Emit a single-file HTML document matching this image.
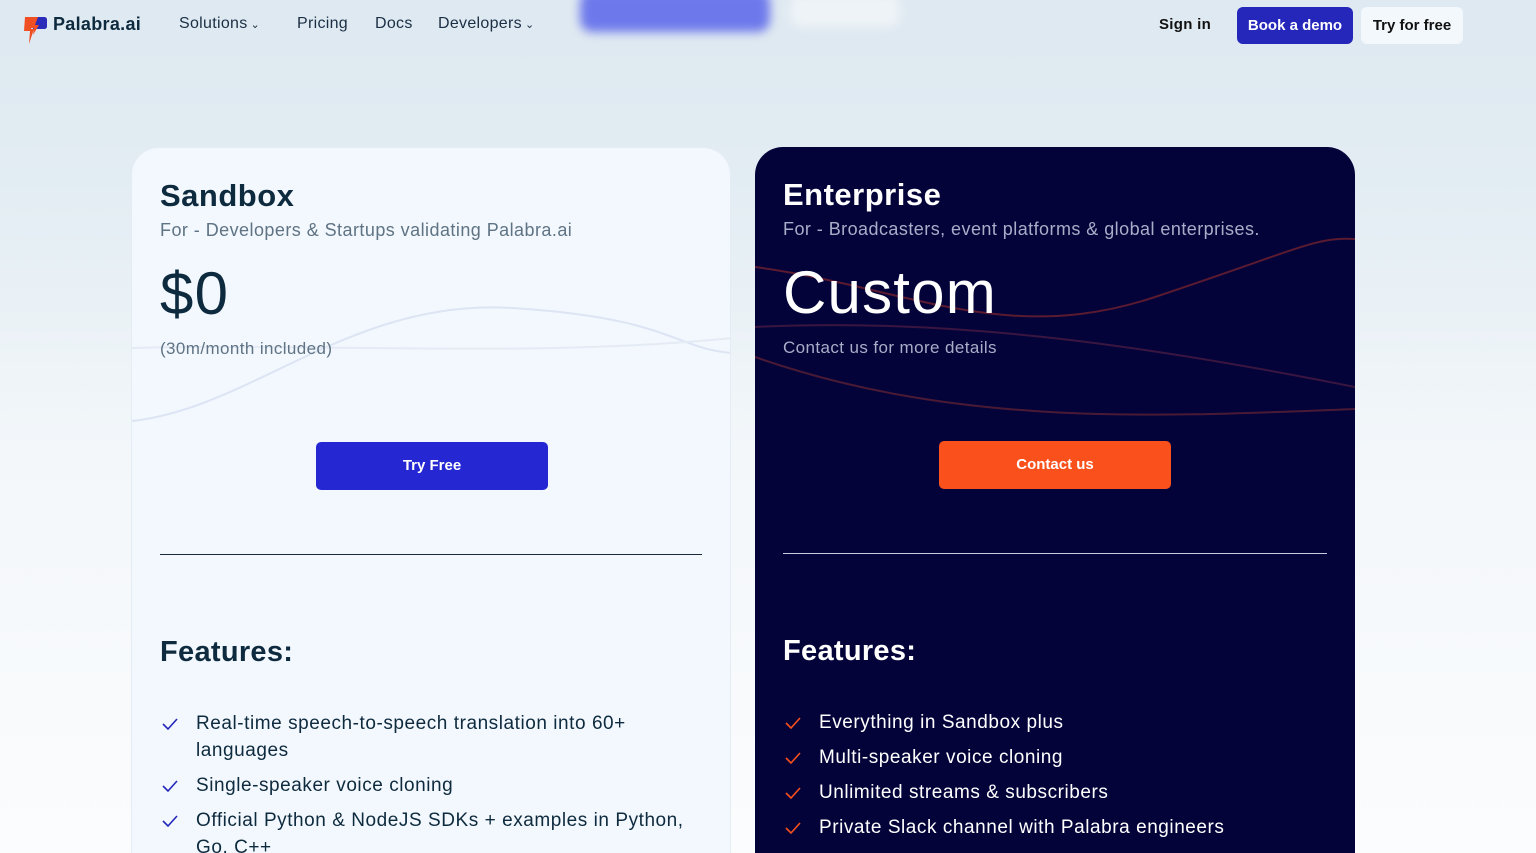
<!DOCTYPE html>
<html><head><meta charset="utf-8"><style>
*{box-sizing:border-box;margin:0;padding:0}
html,body{width:1536px;height:853px;overflow:hidden}
body{font-family:"Liberation Sans",sans-serif;background:linear-gradient(#dde8f0 0,#e3edf3 200px,#f3f7fa 450px,#fbfcfd 853px);position:relative;color:#0e2a3e}
.nav{position:absolute;top:0;left:0;width:1536px;height:57px;background:#dfe9f1}
.nav a{position:absolute;top:15px;font-size:16px;color:#1a2f44;text-decoration:none;letter-spacing:.3px}
.chev{font-size:11px;margin-left:3px}
.blur1{position:absolute;left:580px;top:-10px;width:190px;height:42px;background:#5a66ea;border-radius:12px;filter:blur(5px);opacity:.85}
.blur2{position:absolute;left:790px;top:-5px;width:110px;height:32px;background:#eef3f7;border-radius:10px;filter:blur(5px)}
.btn{position:absolute;top:7px;height:37px;border-radius:6px;font-size:15px;font-weight:bold;line-height:37px;text-align:center}
.card{position:absolute;top:147px;width:600px;height:740px;border-radius:28px;padding:30px 28px;overflow:hidden}
.l{left:131px;background:#f2f8fd;border:1px solid #e4edf4}
.r{left:755px;background:#03033a;color:#fff}
h2{font-size:31px;font-weight:bold;margin-top:0;letter-spacing:.5px}
.sub{font-size:18px;margin-top:6px;letter-spacing:.45px}
.price{font-size:60px;margin-top:18px;line-height:70px;letter-spacing:1.2px}
.small{font-size:17px;margin-top:10px;letter-spacing:.4px}
.cta{position:absolute;left:184px;top:294px;width:232px;height:48px;border-radius:5px;color:#fff;font-size:15px;font-weight:bold;text-align:center;line-height:48px}
.hr{position:absolute;left:28px;right:28px;top:406px;height:1px}
h3{position:absolute;left:28px;top:488px;font-size:29px;font-weight:bold;letter-spacing:.3px}
ul{position:absolute;left:28px;top:562px;list-style:none;width:540px}
li{position:relative;padding-left:36px;font-size:19px;line-height:27px;margin-bottom:8px;letter-spacing:.55px}
li svg{position:absolute;left:2px;top:8px}
</style></head><body>
<div class="nav">
<svg style="position:absolute;left:22px;top:15px" width="26" height="30" viewBox="0 0 26 30"><path d="M3 2h10l-4 12h3l-5 15 1-13H2z" fill="#f04f23"/><path d="M12 2h10c2 0 3 1 3 3v6c0 2-1 3-3 3h-9l-2 0z" fill="#2a2bb8"/><path d="M11 2h5l-3 8h4l-6 10 1-7H9z" fill="#f04f23"/></svg>
<a style="left:53px;font-weight:bold;font-size:18px;top:14px;color:#0e2a3e">Palabra.ai</a>
<a style="left:179px">Solutions<span class="chev">⌄</span></a><a style="left:297px">Pricing</a><a style="left:375px">Docs</a><a style="left:438px">Developers<span class="chev">⌄</span></a>
<div class="blur1"></div><div class="blur2"></div>
<a style="left:1159px;font-weight:bold;font-size:15px;top:16px;color:#111">Sign in</a>
<div class="btn" style="left:1237px;width:116px;background:#2527bb;color:#fff">Book a demo</div>
<div class="btn" style="left:1361px;width:102px;background:#f2f8fc;color:#111">Try for free</div>
</div>
<div class="card l">
<svg style="position:absolute;left:0;top:110px" width="600" height="170"><path d="M0 163C120 150 220 40 380 50S540 90 600 95" stroke="#dde4f4" stroke-width="2" fill="none"/><path d="M0 90C200 85 400 100 600 80" stroke="#e4ebf5" stroke-width="2" fill="none"/></svg>
<h2 style="color:#0e2a3e;position:relative">Sandbox</h2>
<div class="sub" style="color:#5f7384;position:relative">For - Developers &amp; Startups validating Palabra.ai</div>
<div class="price" style="position:relative">$0</div>
<div class="small" style="color:#5f7384;position:relative">(30m/month included)</div>
<div class="cta" style="background:#2527d3">Try Free</div>
<div class="hr" style="background:#1a2a3a"></div>
<h3>Features:</h3>
<ul>
<li><svg width="16" height="12"><path d="M1 6l5 5 9-10" stroke="#2527bb" stroke-width="1.6" fill="none"/></svg>Real-time speech-to-speech translation into 60+ languages</li>
<li><svg width="16" height="12"><path d="M1 6l5 5 9-10" stroke="#2527bb" stroke-width="1.6" fill="none"/></svg>Single-speaker voice cloning</li>
<li><svg width="16" height="12"><path d="M1 6l5 5 9-10" stroke="#2527bb" stroke-width="1.6" fill="none"/></svg>Official Python &amp; NodeJS SDKs + examples in Python, Go, C++</li>
</ul>
</div>
<div class="card r">
<svg style="position:absolute;left:0;top:80px" width="600" height="200"><path d="M0 40C150 60 250 120 400 70S560 10 600 12" stroke="#5a1a30" stroke-width="2" fill="none"/><path d="M0 130C200 200 400 190 600 182" stroke="#4a1a35" stroke-width="2" fill="none"/><path d="M0 100C200 90 400 120 600 160" stroke="#3a1540" stroke-width="2" fill="none"/></svg>
<h2 style="position:relative">Enterprise</h2>
<div class="sub" style="color:#a8aec8;position:relative">For - Broadcasters, event platforms &amp; global enterprises.</div>
<div class="price" style="position:relative">Custom</div>
<div class="small" style="color:#a8aec8;position:relative">Contact us for more details</div>
<div class="cta" style="background:#f9501c">Contact us</div>
<div class="hr" style="background:#c8cce0"></div>
<h3>Features:</h3>
<ul>
<li><svg width="16" height="12"><path d="M1 6l5 5 9-10" stroke="#f9501c" stroke-width="1.6" fill="none"/></svg>Everything in Sandbox plus</li>
<li><svg width="16" height="12"><path d="M1 6l5 5 9-10" stroke="#f9501c" stroke-width="1.6" fill="none"/></svg>Multi-speaker voice cloning</li>
<li><svg width="16" height="12"><path d="M1 6l5 5 9-10" stroke="#f9501c" stroke-width="1.6" fill="none"/></svg>Unlimited streams &amp; subscribers</li>
<li><svg width="16" height="12"><path d="M1 6l5 5 9-10" stroke="#f9501c" stroke-width="1.6" fill="none"/></svg>Private Slack channel with Palabra engineers</li>
</ul>
</div>
</body></html>
